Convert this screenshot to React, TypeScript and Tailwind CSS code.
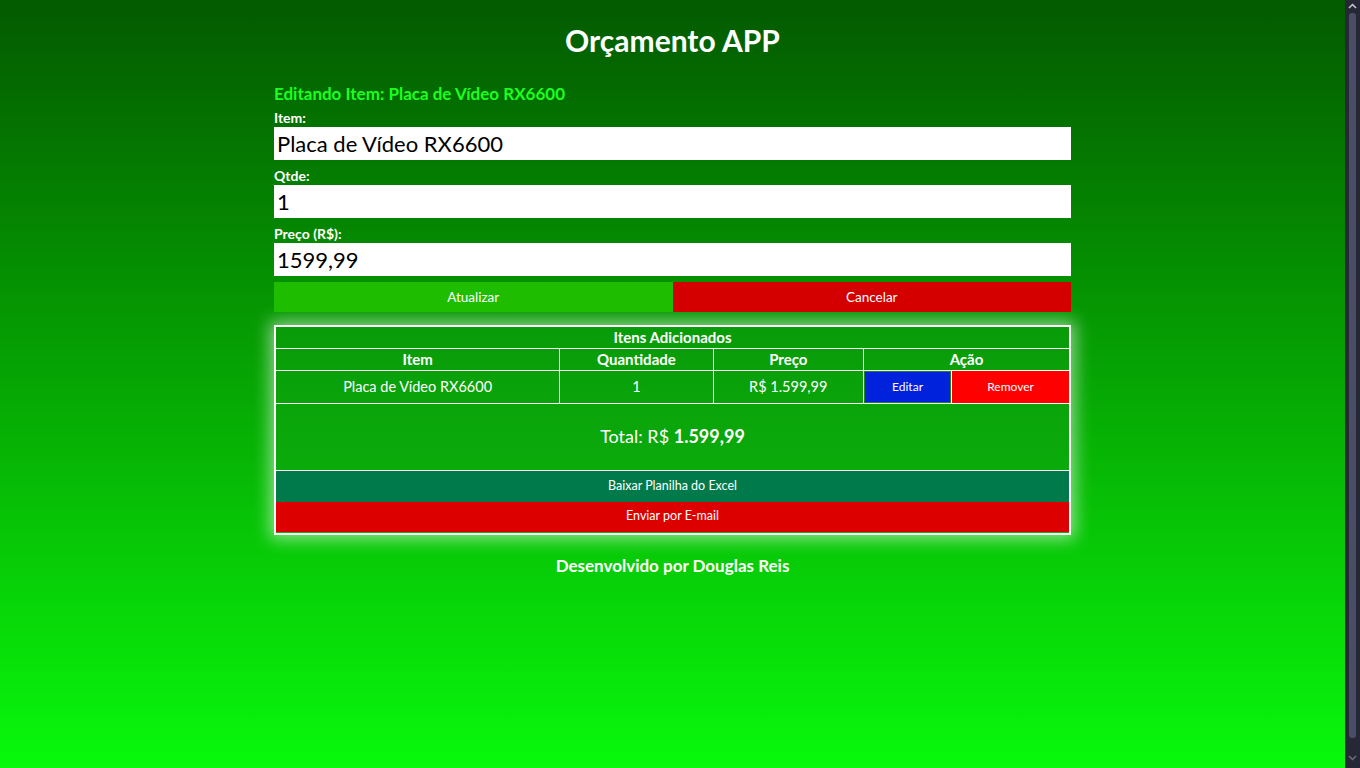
import React from 'react'

const font = { fontFamily: 'Lato, "Open Sans", sans-serif' }

function Field({ label, value }: { label: string; value: string }) {
  return (
    <div className="mt-2 first:mt-0">
      <label className="block text-[14px] font-bold leading-4 text-white">{label}</label>
      <input
        readOnly
        value={value}
        className="mt-px block h-[33px] w-full bg-white px-[3px] text-[22px] text-black outline-none"
        style={font}
      />
    </div>
  )
}

// fake dark scrollbar on the right edge, as in the screenshot
function ScrollStrip() {
  return (
    <div className="flex h-screen w-[15px] shrink-0 flex-col items-center bg-[#262836]">
      <svg width="15" height="13" viewBox="0 0 15 13" className="shrink-0">
        <path d="M4 8 L7.5 4.5 L11 8" fill="none" stroke="#c8c9d4" strokeWidth="1.5" />
      </svg>
      <div className="mt-0 w-[7px] flex-1 rounded-[3px] bg-[#4a4d66]" />
      <svg width="15" height="30" viewBox="0 0 15 30" className="shrink-0">
        <path d="M4 18 L7.5 21.5 L11 18" fill="none" stroke="#6b6d80" strokeWidth="1.5" />
      </svg>
    </div>
  )
}

export default function App() {
  return (
    <div className="flex h-screen overflow-hidden" style={font}>
      <div className="flex-1 bg-gradient-to-b from-[#035a00] to-[#08fa0c]">
        <div className="mx-auto w-[797px] pt-5">
          <h1 className="text-center text-[30px] font-bold leading-10 text-white">Orçamento APP</h1>

          <h2 className="mt-[22px] text-[17px] font-bold leading-6 text-[#1bff1f]">
            Editando Item: Placa de Vídeo RX6600
          </h2>

          <div className="mt-1">
            <Field label="Item:" value="Placa de Vídeo RX6600" />
            <Field label="Qtde:" value="1" />
            <Field label="Preço (R$):" value="1599,99" />
          </div>

          <div className="mt-1.5 flex h-[30px] text-[13.5px] text-white">
            <button className="flex-1 bg-[#1fbd00]">Atualizar</button>
            <button className="flex-1 bg-[#d40000]">Cancelar</button>
          </div>

          <table className="mt-[13px] w-full table-fixed border-collapse border-2 border-white bg-gradient-to-b from-[#099b09] to-[#0bb20b] text-white shadow-[0_0_16px_4px_rgba(255,255,255,0.55)]">
            <colgroup>
              <col className="w-[284px]" />
              <col className="w-[153px]" />
              <col className="w-[150px]" />
              <col className="w-[88px]" />
              <col className="w-[118px]" />
            </colgroup>
            <thead className="text-[15px] font-bold">
              <tr className="h-[22px]">
                <th colSpan={5} className="border border-white p-0 leading-4">Itens Adicionados</th>
              </tr>
              <tr className="h-[22px]">
                <th className="border border-white p-0 leading-4">Item</th>
                <th className="border border-white p-0 leading-4">Quantidade</th>
                <th className="border border-white p-0 leading-4">Preço</th>
                <th colSpan={2} className="border border-white p-0 leading-4">Ação</th>
              </tr>
            </thead>
            <tbody className="text-[14.5px]">
              <tr className="h-[33px] text-center">
                <td className="border border-white p-0">Placa de Vídeo RX6600</td>
                <td className="border border-white p-0">1</td>
                <td className="border border-white p-0">R$ 1.599,99</td>
                <td className="border border-white p-0">
                  <button className="h-[32px] w-full border border-[#17862a] bg-[#0022dd] text-[12px] text-white">Editar</button>
                </td>
                <td className="border border-white p-0">
                  <button className="h-[32px] w-full bg-[#ff0000] text-[12px] text-white">Remover</button>
                </td>
              </tr>
              <tr className="h-[67px]">
                <td colSpan={5} className="border border-white p-0 text-center text-[18px]">
                  Total: R$ <span className="font-bold">1.599,99</span>
                </td>
              </tr>
              <tr>
                <td colSpan={5} className="border border-white p-0 pb-px">
                  <button className="block h-[31px] w-full bg-[#007a4a] text-[12.5px] text-white">Baixar Planilha do Excel</button>
                  <button className="block h-[30px] w-full bg-[#dd0000] text-[12.5px] text-white">Enviar por E-mail</button>
                </td>
              </tr>
            </tbody>
          </table>

          <p className="mt-[19px] text-center text-[17px] font-bold leading-6 text-white">
            Desenvolvido por Douglas Reis
          </p>
        </div>
      </div>
      <ScrollStrip />
    </div>
  )
}
